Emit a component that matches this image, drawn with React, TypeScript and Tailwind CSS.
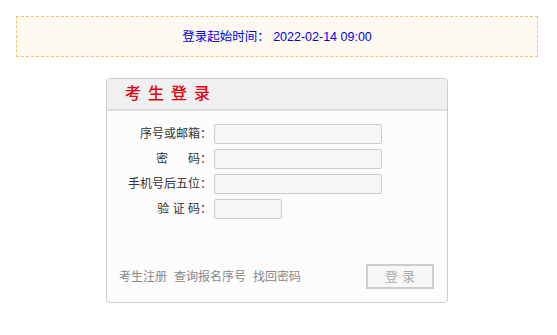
import React from 'react';

const font = { fontFamily: '"Liberation Sans", "Noto Sans CJK SC", sans-serif' };

const Field = ({ label, short }: { label: React.ReactNode; short?: boolean }) => (
  <div className="flex items-center h-[20px] mb-[5px]">
    <label className="w-[98px] text-right text-[12px] text-[#333] whitespace-pre">{label}</label>
    <input
      className={`ml-[2px] h-[20px] ${short ? 'w-[68px]' : 'w-[168px]'} bg-[#f6f6f6] border border-[#ccc] rounded-[2px] outline-none`}
    />
  </div>
);

const App = () => {
  return (
    <div className="w-[557px] h-[335px] bg-white pt-[16px]" style={font}>
      {/* notice */}
      <div className="mx-[16px] w-[522px] h-[41px] border border-dashed border-[#f5c46e] bg-[#fffaf1] flex items-center justify-center">
        <span className="text-[12.5px] text-[#0000ee] pt-[1px]">登录起始时间：&nbsp;2022-02-14 09:00</span>
      </div>

      {/* login card */}
      <div className="ml-[106px] mt-[21px] w-[342px] h-[225px] border border-[#ccc] rounded-[4px] bg-[#fcfcfc] overflow-hidden flex flex-col">
        <div className="h-[32px] bg-[#f0f0f0] border-b-2 border-[#dedede] flex items-center pl-[18px]">
          <h2 className="text-[16px] font-medium text-[#e4000f] tracking-[7px]">考生登录</h2>
        </div>

        <form className="pt-[13px] pl-[7px]" onSubmit={(e) => e.preventDefault()}>
          <Field label="序号或邮箱：" />
          <Field label={'密      码：'} />
          <Field label="手机号后五位：" />
          <Field label="验 证 码：" short />
        </form>

        <div className="mt-auto mb-[13px] flex items-center justify-between pl-[12px] pr-[13px]">
          <div className="flex gap-[7px] text-[12px] text-[#888]">
            <a>考生注册</a>
            <a>查询报名序号</a>
            <a>找回密码</a>
          </div>
          <button className="w-[68px] h-[25px] border-2 border-[#ccc] bg-[#f7f7f7] text-[13px] text-[#aaa] tracking-[4px] pl-[4px]">
            登录
          </button>
        </div>
      </div>
    </div>
  );
};

export default App;
